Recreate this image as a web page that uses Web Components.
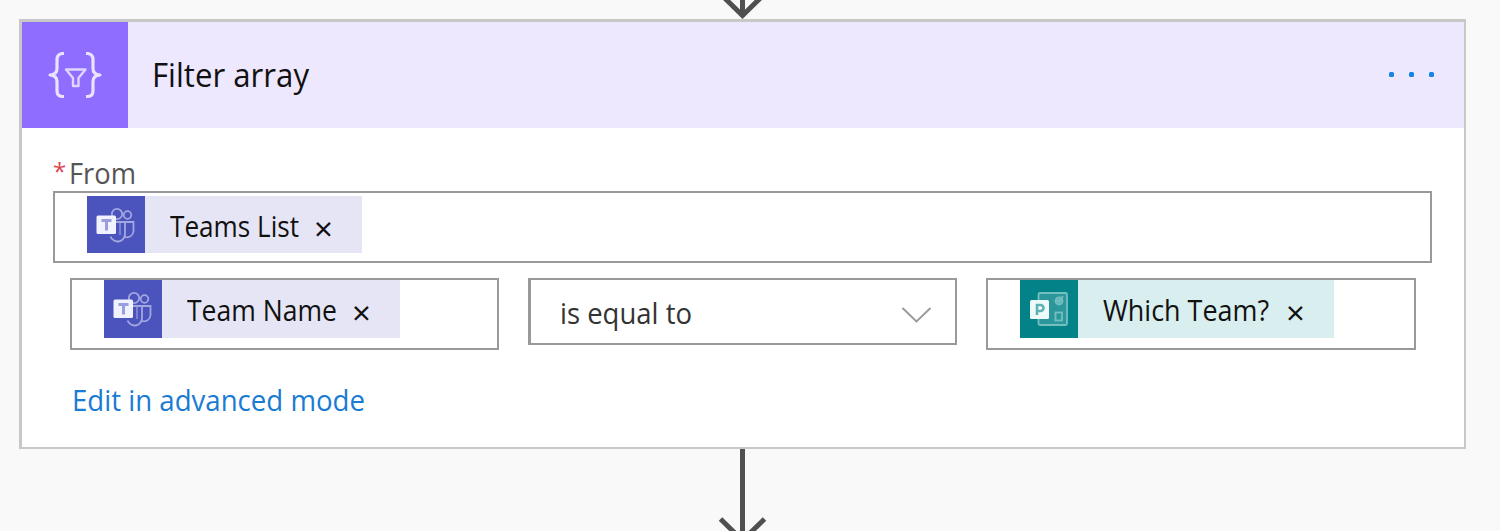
<!DOCTYPE html>
<html lang="en"><head><meta charset="utf-8"><title>Filter array</title>
<style>
html,body{margin:0;height:531px;overflow:hidden;background:#f9f9f9;font-family:"Open Sans","Noto Sans",sans-serif}
</style></head><body>
<flow-canvas></flow-canvas>
<script>
const define=(name,html,setup)=>customElements.define(name,class extends HTMLElement{
  connectedCallback(){
    if(this.shadowRoot)return;
    const t=document.createElement('template');t.innerHTML=html;
    this.attachShadow({mode:'open'}).append(t.content.cloneNode(true));
    if(setup)setup(this,this.shadowRoot);
  }
});

/* A single line of text condensed or widened to an exact advance width. */
define('fit-text',`<style>:host{display:block;flex:none;white-space:nowrap}span{display:inline-block;transform-origin:0 50%}</style><span><slot></slot></span>`,
(host,root)=>{
  const s=root.querySelector('span'),w=+host.getAttribute('width');
  host.style.width=w+'px';
  s.style.transform='scaleX('+(w/s.getBoundingClientRect().width)+')';
});

define('teams-icon',`<style>:host{display:block;width:58px;height:100%;background:#4b53bc}svg{display:block}</style>
<svg width="58" height="58" viewBox="0 0 58 58" fill="none" stroke="#a3a7e0" stroke-width="1.800">
<circle cx="30" cy="18" r="5.200"/><circle cx="40.500" cy="19" r="3.800"/>
<path d="M28 26h10v11a7.500 7.500 0 0 1-14.500 3.500M38 26h8.500v9a6.500 6.500 0 0 1-8.500 6"/><path d="M33 27v12" stroke="#8187d2"/>
<rect x="9.500" y="19.500" width="19.500" height="18.500" rx="1.500" fill="#f1f2ff" stroke="none"/>
<path d="M14.500 24.500h10M19.500 24.500v10" stroke="#9a9edd" stroke-width="3"/></svg>`);

define('forms-icon',`<style>:host{display:block;width:58px;height:100%;background:#038387}svg{display:block}</style>
<svg width="58" height="58" viewBox="0 0 58 58" fill="none" stroke="#74bfc0" stroke-width="1.800">
<rect x="18.500" y="13" width="28.500" height="32" rx="1.500" fill="#2b979a"/>
<circle cx="39" cy="21" r="3.500" fill="#58aeb0"/><path d="M37 20l2 2 4-6"/><rect x="35.500" y="32.500" width="6.500" height="8"/>
<rect x="10" y="20" width="19" height="19" rx="1.500" fill="#eefafa" stroke="none"/>
<path d="M17 35v-10h3.500a3 3 0 0 1 0 6H17" stroke="#5fb2b4" stroke-width="2.600"/></svg>`);

define('token-chip',`<style>
:host{display:flex;flex:none;box-sizing:border-box;align-items:center;background:var(--chip);color:#111;font-size:30px;line-height:56px}
.body{display:flex;align-items:center;padding:2px 0 0 25px}
.x{font-size:33px;margin-left:var(--gap,15px);padding-top:5px;line-height:51px}
</style><slot name="icon"></slot><div class="body"><slot></slot><span class="x">×</span></div>`);

define('field-box',`<style>
:host{display:flex;box-sizing:border-box;align-items:flex-start;border:2px solid #999;background:#fff;height:72px}
</style><slot></slot>`);

define('select-box',`<style>
:host{display:flex;box-sizing:border-box;width:429px;height:67px;border:2px solid #999;border-left-width:3px;align-items:center;justify-content:space-between;padding:3px 23px 0 29px;font-size:29px;line-height:60px;color:#333;background:#fff}
svg{margin-top:4px}
</style><slot></slot><svg width="31" height="18" viewBox="0 0 31 18" fill="none" stroke="#999" stroke-width="1.900"><path d="M1.500 2L15.500 15.500 29.500 2"/></svg>`);

define('card-header',`<style>
:host{display:flex;height:106px;background:#eee8ff;align-items:center}
.tile{width:106px;height:106px;background:#8f6dff;flex:none}
.title{flex:1;padding-left:24px;font-size:33px;line-height:106px;color:#111}
.dots{display:flex;gap:15px;margin:-2px 30px 0 0}
.dots i{width:5px;height:5px;border-radius:1.500px;background:#1683e3}
svg{display:block}
</style>
<div class="tile"><svg width="106" height="106" viewBox="0 0 106 106" fill="none" stroke="#eae3ff" stroke-width="3.200" stroke-linejoin="round">
<path d="M42 31.500h-2q-5 1-5 6v9q0 6-7 6.500q7 .5 7 6.500v9q0 6 5 6h2M64 31.500h2q5 1 5 6v9q0 6 7 6.500q-7 .5-7 6.500v9q0 6-5 6h-2"/>
<path d="M44 47.500h19.500l-7 8.500v8h-5.500v-8z" stroke="#dfd5ff" stroke-width="2.400"/></svg></div>
<div class="title"><slot></slot></div><div class="dots"><i></i><i></i><i></i></div>`);

define('flow-arrow',`<style>:host{display:block;overflow:hidden}svg{display:block;margin:0 auto}</style>
<svg width="60" fill="none" stroke="#505050" stroke-width="5"><path/></svg>`,
(host,root)=>{
  const tip=+host.getAttribute('tip'),h=host.getAttribute('height');
  root.querySelector('svg').setAttribute('height',h);
  root.querySelector('path').setAttribute('d',`M30.500 -30V${tip-2}M8.500 ${tip-25}L30.500 ${tip-3.500}L52.500 ${tip-25}`);
});

define('filter-card',`<style>
:host{display:block;box-sizing:border-box;width:1447px;height:430px;margin-left:19px;border:solid #c8c8c8;border-width:3px 2px 2px 3px;background:#fff}
.content{padding:27px 32px 0 31px}
.label{display:flex;height:36px;font-size:29px;line-height:35px;color:#555}
.star{color:#dc4650;font-size:24px;width:16px;line-height:32px}
.row{display:flex;gap:29px;margin:15px 0 0 17px;align-items:flex-start}
.small{width:429px}.last{width:430px}
token-chip{--chip:#e5e5f5}
.t1{width:275px;height:57px;margin:3px 0 0 32px}
.t2{width:296px;height:58px;margin-left:32px}
.t3{width:314px;height:58px;margin-left:32px;--chip:#d9eeee;--gap:17px}
.link{color:#1a7bd3;font-size:29px;line-height:40px;margin:30px 0 0 19px}
</style>
<card-header><fit-text width="157">Filter array</fit-text></card-header>
<div class="content">
<div class="label"><span class="star">*</span><fit-text width="67">From</fit-text></div>
<field-box><token-chip class="t1"><teams-icon slot="icon"></teams-icon><fit-text width="129">Teams List</fit-text></token-chip></field-box>
<div class="row">
<field-box class="small"><token-chip class="t2"><teams-icon slot="icon"></teams-icon><fit-text width="150">Team Name</fit-text></token-chip></field-box>
<select-box><fit-text width="132">is equal to</fit-text></select-box>
<field-box class="last"><token-chip class="t3"><forms-icon slot="icon"></forms-icon><fit-text width="166">Which Team?</fit-text></token-chip></field-box>
</div>
<div class="link"><fit-text width="293">Edit in advanced mode</fit-text></div>
</div>`);

define('flow-canvas',`<style>:host{display:block;width:1500px;height:531px;overflow:hidden}
flow-arrow{width:60px;margin-left:712px}</style>
<flow-arrow height="19" tip="19"></flow-arrow><filter-card></filter-card><flow-arrow height="82" tip="95"></flow-arrow>`);
</script></body></html>
